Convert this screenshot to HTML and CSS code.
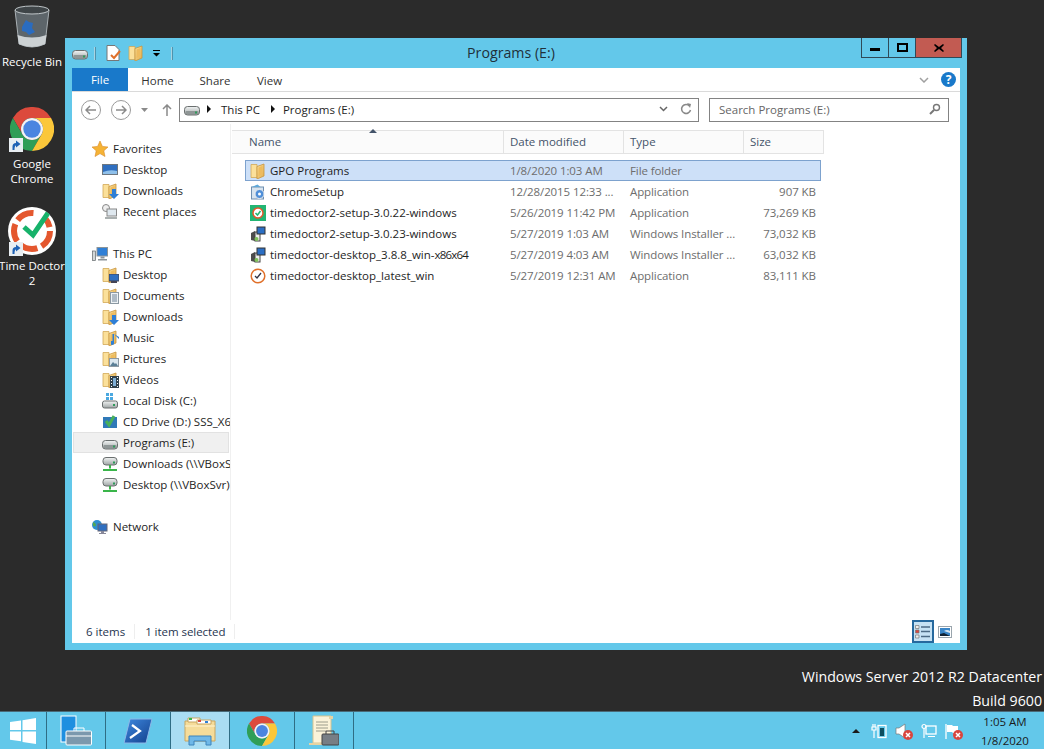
FILE: index.html

```html
<!DOCTYPE html>
<html lang="en">
<head>
    <meta charset="UTF-8">
    <title>Programs (E:)</title>
    <link rel="stylesheet" href="styles.css">
</head>
<body>
    <svg class="defs" width="0" height="0">
        <defs>
            <linearGradient id="g-fold" x1="0" y1="0" x2="1" y2="1">
                <stop offset="0" stop-color="#fbe3a0"/>
                <stop offset="1" stop-color="#e2ab48"/>
            </linearGradient>
            <linearGradient id="g-drive" x1="0" y1="0" x2="0" y2="1">
                <stop offset="0" stop-color="#f2f4f4"/>
                <stop offset="1" stop-color="#9ea5a5"/>
            </linearGradient>
            <linearGradient id="g-ps" x1="0" y1="0" x2="1" y2="1">
                <stop offset="0" stop-color="#3f8ae0"/>
                <stop offset="1" stop-color="#123f8c"/>
            </linearGradient>
        </defs>
        <symbol id="i-drive" viewBox="0 0 16 16">
            <rect x=".5" y="5.500" width="15" height="8.500" rx="3" fill="url(#g-drive)" stroke="#6a6f6f"/>
            <rect x="1.500" y="10" width="13" height="3" rx="1" fill="#8f9696"/>
            <rect x="11" y="10.500" width="2" height="2" fill="#2f9a5a"/>
        </symbol>
        <symbol id="i-folder" viewBox="0 0 16 16">
            <path d="M1 1.500h6v13H1z" fill="#fbe09a" stroke="#d2a858" stroke-width=".8"/>
            <path d="M7 3.500l7-2.500v12l-7 3z" fill="url(#g-fold)" stroke="#c9963e" stroke-width=".8"/>
            <path d="M8.500 4.500l4-1.400v8.400l-4 1.600z" fill="#eebb5e"/>
        </symbol>
        <symbol id="i-chrome" viewBox="0 0 48 48">
            <path d="M3.200 12A24 24 0 0 1 44.800 12H24A12 12 0 0 0 13.600 30Z" fill="#dc4a3c"/>
            <path d="M3.200 12A24 24 0 0 0 24 48L34.400 30A12 12 0 0 1 13.600 30Z" fill="#2f9e57"/>
            <path d="M44.800 12A24 24 0 0 1 24 48L34.400 30A12 12 0 0 0 24 12Z" fill="#fbc73a"/>
            <circle cx="24" cy="24" r="12" fill="#f3f3f3"/>
            <circle cx="24" cy="24" r="9.500" fill="#4a85e0"/>
        </symbol>
        <symbol id="i-shortcut" viewBox="0 0 14 14">
            <rect width="14" height="14" fill="#e9eef2"/>
            <path d="M3.500 12V8.500Q3.500 5 7 5V2.500L11.500 6 7 9.500V7.500Q5.500 7.500 5.500 12z" fill="#1f62b5"/>
        </symbol>
        <symbol id="i-msi" viewBox="0 0 16 16">
            <path d="M1 7l4-2v10l-4-1z" fill="#4d4d4d"/>
            <rect x="5" y="6" width="5" height="9" fill="#eee" stroke="#444"/>
            <rect x="7" y="1" width="8" height="7" fill="#2c6fc4" stroke="#333"/>
            <circle cx="6.500" cy="13" r="2" fill="#7fc25a"/>
        </symbol>
        <symbol id="i-net" viewBox="0 0 16 16">
            <rect x="1" y="1.500" width="14" height="7.500" rx="3" fill="url(#g-drive)" stroke="#6a6f6f"/>
            <rect x="11" y="5.500" width="2" height="2" fill="#2f9a5a"/>
            <path d="M8 9v3.500M1 14h14" stroke="#3ab54a" stroke-width="2"/>
        </symbol>
        <symbol id="i-pc" viewBox="0 0 16 16">
            <rect x="5" y="1.500" width="10.500" height="8.500" fill="#2f7fd6" stroke="#8b9499"/>
            <path d="M8.500 10.500h4v2h-4zM6 13h9v1.500H6z" fill="#8b9499"/>
            <rect x=".5" y="5" width="3" height="9.500" fill="#d4d8d9" stroke="#5f6669" stroke-width=".7"/>
        </symbol>
        <symbol id="i-redx" viewBox="0 0 10 10">
            <circle cx="5" cy="5" r="5" fill="#d9463e"/>
            <path d="M3 3l4 4M7 3l-4 4" stroke="#fff" stroke-width="1.500"/>
        </symbol>
    </svg>

    <div class="desktop">
        <!-- desktop icons -->
        <div class="desk-icon recycle">
            <svg width="36" height="44" viewBox="0 0 36 44">
                <path d="M1 5l4 34q13 6 26 0l4-34z" fill="#5d656a" stroke="#a9b0b4"/>
                <ellipse cx="18" cy="5" rx="17" ry="4" fill="#3f4548" stroke="#c0c6c9"/>
                <path d="M3.500 30q14.500 5 29 0l-1.500 9q-13 6-26 0z" fill="#ccd1d3"/>
                <path d="M8 22l4-7 3 2 4 1-1 5 3 4-6 3-3-3-4-1z" fill="#2a6cc0"/>
            </svg>
            <span>Recycle Bin</span>
        </div>
        <div class="desk-icon chrome">
            <svg class="main-pic" width="44" height="44"><use href="#i-chrome"/></svg>
            <svg class="arrow" width="14" height="14"><use href="#i-shortcut"/></svg>
            <span>Google<br>Chrome</span>
        </div>
        <div class="desk-icon doctor">
            <svg class="main-pic" width="48" height="48" viewBox="0 0 48 48">
                <circle cx="24" cy="24" r="24" fill="#fff"/>
                <circle cx="24" cy="24" r="18" fill="none" stroke="#e4572e" stroke-width="6" stroke-dasharray="18 4.600"/>
                <path d="M30 2L42 8 33 18 24 14z" fill="#fff"/>
                <path d="M16 20l9 8L40 6" fill="none" stroke="#17b26a" stroke-width="5"/>
            </svg>
            <svg class="arrow" width="14" height="14"><use href="#i-shortcut"/></svg>
            <span>Time Doctor<br>2</span>
        </div>

        <div class="window">
            <div class="titlebar">
                <div class="quick">
                    <svg width="16" height="16"><use href="#i-drive"/></svg>
                    <i class="qsep"></i>
                    <svg class="qdoc" width="15" height="16" viewBox="0 0 15 16">
                        <path d="M1 .5h8l4 4v11H1z" fill="#fff" stroke="#777"/>
                        <path d="M5 10l3 3 6-7" fill="none" stroke="#e0702a" stroke-width="2"/>
                    </svg>
                    <svg width="16" height="16"><use href="#i-folder"/></svg>
                    <svg class="qdrop" width="8" height="8" viewBox="0 0 8 8">
                        <path d="M0 1h7v1H0zM0 4h7L3.500 7.500z" fill="#000"/>
                    </svg>
                    <i class="qsep"></i>
                </div>
                <div class="title">Programs (E:)</div>
                <div class="caption">
                    <div class="cap-btn min"><i></i></div>
                    <div class="cap-btn max"><i></i></div>
                    <div class="cap-btn close">
                        <svg width="10" height="8" viewBox="0 0 10 8">
                            <path d="M1 0l4 3 4-3 1 1-3 3 3 3-1 1-4-3-4 3-1-1 3-3-3-3z" fill="#000"/>
                        </svg>
                    </div>
                </div>
            </div>

            <div class="ribbon">
                <div class="tab file">File</div>
                <div class="tab">Home</div>
                <div class="tab">Share</div>
                <div class="tab">View</div>
                <svg class="chev" width="10" height="6" viewBox="0 0 10 6">
                    <path d="M1 1l4 4 4-4" fill="none" stroke="#a0a0a0" stroke-width="1.500"/>
                </svg>
                <div class="help">?</div>
            </div>

            <div class="navbar">
                <div class="circle-btn"><svg width="12" height="10" viewBox="0 0 12 10"><path d="M5 1L1 5l4 4M1 5h10" fill="none" stroke="#8a8a8a" stroke-width="1.500"/></svg></div>
                <div class="circle-btn fwd"><svg width="12" height="10" viewBox="0 0 12 10"><path d="M7 1l4 4-4 4M11 5H1" fill="none" stroke="#8a8a8a" stroke-width="1.500"/></svg></div>
                <svg class="hist" width="7" height="4" viewBox="0 0 7 4"><path d="M0 0h7L3.500 4z" fill="#8a8a8a"/></svg>
                <svg class="up" width="10" height="12" viewBox="0 0 10 12"><path d="M5 12V1M1 5l4-4 4 4" fill="none" stroke="#8a8a8a" stroke-width="1.500"/></svg>
                <div class="address">
                    <svg width="16" height="16"><use href="#i-drive"/></svg>
                    <i class="crumb"></i><span>This PC</span>
                    <i class="crumb second"></i><span>Programs (E:)</span>
                    <svg class="addr-drop" width="9" height="6" viewBox="0 0 9 6"><path d="M1 1l3.500 3.500L8 1" fill="none" stroke="#666" stroke-width="1.500"/></svg>
                    <svg class="addr-refresh" width="12" height="12" viewBox="0 0 12 12"><path d="M9.500 3A4.500 4.500 0 1 0 10.500 7" fill="none" stroke="#888" stroke-width="1.500"/><path d="M7 0l4 1-1 4z" fill="#888"/></svg>
                </div>
                <div class="search">
                    <span>Search Programs (E:)</span>
                    <svg width="12" height="12" viewBox="0 0 12 12"><circle cx="7.500" cy="4.500" r="3" fill="none" stroke="#777" stroke-width="1.400"/><path d="M5 7l-4 4" stroke="#777" stroke-width="2"/></svg>
                </div>
            </div>

            <div class="content">
                <div class="sidebar">
                    <div class="side-row top">
                        <svg width="16" height="16" viewBox="0 0 16 16"><path d="M8 0l2.400 5.400 5.600.6-4.200 3.800 1.200 5.700L8 12.600 3 15.500l1.200-5.700L0 6l5.600-.6z" fill="#f5b335" stroke="#d98a2a" stroke-width=".6"/></svg>
                        Favorites
                    </div>
                    <div class="side-row"><svg width="16" height="16" viewBox="0 0 16 16"><rect x=".5" y="2.500" width="15" height="10" fill="#2f6fc0" stroke="#6d7780"/><path d="M1 10q7-3 14-1v3H1z" fill="#8fc0ea"/></svg>Desktop</div>
                    <div class="side-row"><div class="fold"><svg width="16" height="16"><use href="#i-folder"/></svg><svg class="over" width="10" height="10" viewBox="0 0 10 10"><path d="M3 0h4v5h3L5 10 0 5h3z" fill="#2f7fd6"/></svg></div>Downloads</div>
                    <div class="side-row"><svg width="16" height="16" viewBox="0 0 16 16"><circle cx="4" cy="4" r="3.500" fill="#eee" stroke="#888"/><rect x="5" y="5" width="9.500" height="7" fill="#dfe8ef" stroke="#888"/><path d="M3 13h12v2H3z" fill="#aab0b0"/></svg>Recent places</div>
                    <div class="side-gap"></div>
                    <div class="side-row top"><svg width="16" height="16"><use href="#i-pc"/></svg>This PC</div>
                    <div class="side-row"><div class="fold"><svg width="16" height="16"><use href="#i-folder"/></svg><svg class="over" width="10" height="9" viewBox="0 0 10 9"><rect width="10" height="7" fill="#2f6fc0" stroke="#445"/><rect x="2" y="7" width="6" height="2" fill="#445"/></svg></div>Desktop</div>
                    <div class="side-row"><div class="fold"><svg width="16" height="16"><use href="#i-folder"/></svg><svg class="over" width="9" height="12" viewBox="0 0 9 12"><rect x=".5" y=".5" width="8" height="11" fill="#eef2f5" stroke="#8c99a3"/><path d="M2 3h5M2 5h5M2 7h5M2 9h5" stroke="#6f8396"/></svg></div>Documents</div>
                    <div class="side-row"><div class="fold"><svg width="16" height="16"><use href="#i-folder"/></svg><svg class="over" width="10" height="10" viewBox="0 0 10 10"><path d="M3 0h4v5h3L5 10 0 5h3z" fill="#2f7fd6"/></svg></div>Downloads</div>
                    <div class="side-row"><div class="fold"><svg width="16" height="16"><use href="#i-folder"/></svg><svg class="over" width="8" height="12" viewBox="0 0 8 12"><path d="M3 0v8.500A2 2 0 1 1 1.500 7V0H3l5 3v2z" fill="#2f7fd6"/></svg></div>Music</div>
                    <div class="side-row"><div class="fold"><svg width="16" height="16"><use href="#i-folder"/></svg><svg class="over" width="10" height="9" viewBox="0 0 10 9"><rect x=".5" y=".5" width="9" height="8" fill="#dbe7ef" stroke="#8c99a3"/><path d="M1 8l3-4 2 2 1-1 2 3z" fill="#5a7f96"/></svg></div>Pictures</div>
                    <div class="side-row"><div class="fold"><svg width="16" height="16"><use href="#i-folder"/></svg><svg class="over" width="9" height="12" viewBox="0 0 9 12"><rect width="9" height="12" fill="#31424d"/><path d="M1 1h1v1H1zM1 4h1v1H1zM1 7h1v1H1zM1 10h1v1H1zM7 1h1v1H7zM7 4h1v1H7zM7 7h1v1H7zM7 10h1v1H7z" fill="#fff"/><rect x="3" y="2" width="3" height="8" fill="#7fb0d8"/></svg></div>Videos</div>
                    <div class="side-row"><svg width="16" height="16" viewBox="0 0 16 16"><path d="M4 0h3v3H4zM8 0h3v3H8zM4 4h3v3H4zM8 4h3v3H8z" fill="#4aa8e0"/><rect x=".5" y="8" width="15" height="7" rx="2" fill="url(#g-drive)" stroke="#6a6f6f"/><rect x="11" y="11" width="2" height="2" fill="#2f9a5a"/></svg>Local Disk (C:)</div>
                    <div class="side-row"><svg width="16" height="16" viewBox="0 0 16 16"><rect x="1" y="3" width="14" height="11" fill="#2f79b8"/><path d="M4 7l3 4 5-9" fill="none" stroke="#49b05a" stroke-width="3"/></svg>CD Drive (D:) SSS_X6</div>
                    <div class="side-row current"><svg width="16" height="16"><use href="#i-drive"/></svg>Programs (E:)</div>
                    <div class="side-row"><svg width="16" height="16"><use href="#i-net"/></svg>Downloads (\\VBoxS</div>
                    <div class="side-row"><svg width="16" height="16"><use href="#i-net"/></svg>Desktop (\\VBoxSvr)</div>
                    <div class="side-gap"></div>
                    <div class="side-row top"><svg width="16" height="16" viewBox="0 0 16 16"><circle cx="5" cy="6" r="5" fill="#2f8fd0"/><path d="M1 3q3 1 3 3t-3 1z" fill="#53a853"/><rect x="6" y="5" width="9" height="7" fill="#2f6fc0" stroke="#667"/><path d="M9 12h3v2H9zM7 14h7v1H7z" fill="#889"/></svg>Network</div>
                </div>

                <div class="files">
                    <div class="sort-caret"></div>
                    <div class="file-head">
                        <div>Name</div>
                        <div>Date modified</div>
                        <div>Type</div>
                        <div>Size</div>
                    </div>
                    <div class="file-row selected">
                        <div class="fname"><svg width="16" height="16"><use href="#i-folder"/></svg>GPO Programs</div>
                        <div>1/8/2020 1:03 AM</div><div>File folder</div><div class="fsize"></div>
                    </div>
                    <div class="file-row">
                        <div class="fname"><svg width="16" height="16" viewBox="0 0 16 16"><rect x="1.500" y="3" width="12" height="12" fill="#d7e4ef" stroke="#6f8fb0"/><circle cx="9.500" cy="10" r="4.500" fill="#4f8fd8" stroke="#eee"/><path d="M1.500 3l6-2.500 3 2.500z" fill="#5fa8d8"/><circle cx="9.500" cy="10" r="1.500" fill="#fff"/></svg>ChromeSetup</div>
                        <div>12/28/2015 12:33 ...</div><div>Application</div><div class="fsize">907 KB</div>
                    </div>
                    <div class="file-row">
                        <div class="fname"><svg width="16" height="16" viewBox="0 0 16 16"><rect width="16" height="16" fill="#22b573"/><circle cx="8" cy="8" r="5" fill="#fff" stroke="#e4572e" stroke-width="1.500"/><path d="M5.500 8l2 2 3-4" fill="none" stroke="#22b573" stroke-width="1.500"/></svg>timedoctor2-setup-3.0.22-windows</div>
                        <div>5/26/2019 11:42 PM</div><div>Application</div><div class="fsize">73,269 KB</div>
                    </div>
                    <div class="file-row">
                        <div class="fname"><svg width="16" height="16"><use href="#i-msi"/></svg>timedoctor2-setup-3.0.23-windows</div>
                        <div>5/27/2019 1:03 AM</div><div>Windows Installer ...</div><div class="fsize">73,032 KB</div>
                    </div>
                    <div class="file-row">
                        <div class="fname"><svg width="16" height="16"><use href="#i-msi"/></svg><span>timedoctor-desktop_3.8.8_win-<span class="tight">x86x64</span></span></div>
                        <div>5/27/2019 4:03 AM</div><div>Windows Installer ...</div><div class="fsize">63,032 KB</div>
                    </div>
                    <div class="file-row">
                        <div class="fname"><svg width="16" height="16" viewBox="0 0 16 16"><circle cx="8" cy="8" r="6.800" fill="#fff" stroke="#e0702a" stroke-width="1.500"/><path d="M5 8l2 2 4-5" fill="none" stroke="#334" stroke-width="1.300"/></svg>timedoctor-desktop_latest_win</div>
                        <div>5/27/2019 12:31 AM</div><div>Application</div><div class="fsize">83,111 KB</div>
                    </div>
                </div>
            </div>

            <div class="statusbar">
                <span class="count">6 items</span>
                <span class="picked">1 item selected</span>
                <div class="views">
                    <div class="view-btn on">
                        <svg width="16" height="14" viewBox="0 0 16 14"><path d="M.5 .5h3.500v3H.5z" fill="#eee" stroke="#777" stroke-width=".7"/><path d="M.5 5h3.500v3H.5z" fill="#d9463e" stroke="#777" stroke-width=".7"/><path d="M.5 10h3.500v3H.5z" fill="#eee" stroke="#777" stroke-width=".7"/><path d="M6 2h9M6 6.500h9M6 11.500h9" stroke="#4c6b85" stroke-width="1.300"/></svg>
                    </div>
                    <div class="view-btn plain">
                        <svg width="14" height="12" viewBox="0 0 14 12"><rect x=".5" y=".5" width="13" height="11" fill="#fff" stroke="#9aa5ad"/><rect x="2" y="2" width="10" height="8" fill="#3a86c8"/><path d="M2 10V8l4-1 6 3z" fill="#123"/><path d="M6 5q3-2 6 0v2z" fill="#dbe7ef"/></svg>
                    </div>
                </div>
            </div>
        </div>

        <div class="edition">Windows Server 2012 R2 Datacenter<br>Build 9600</div>
    </div>

    <div class="taskbar">
        <div class="task start">
            <svg width="28" height="28" viewBox="0 0 28 28"><path d="M1 5l11-1.600V13H1zM13.500 3.200L27 1v12H13.500zM1 14.500h11v9.700L1 22.700zM13.500 14.500H27V27l-13.500-2z" fill="#fff"/></svg>
        </div>
        <div class="task">
            <svg width="32" height="32" viewBox="0 0 32 32"><rect x="1" y="1" width="15" height="26" fill="#1e8fe0" stroke="#fff"/><rect x="6" y="16" width="25.500" height="14" rx="1" fill="#7b98ad" stroke="#fff"/><path d="M14 16v-3h10v3M6 21h25.500" fill="none" stroke="#fff"/></svg>
        </div>
        <div class="task">
            <svg width="28" height="26" viewBox="0 0 28 26"><path d="M6 1h22l-6 24H0z" fill="url(#g-ps)" stroke="#8db8e8"/><path d="M8 7l8 6-10 7" fill="none" stroke="#fff" stroke-width="2.200"/></svg>
        </div>
        <div class="task active">
            <svg width="32" height="32" viewBox="0 0 32 32"><path d="M1 6h30v20H1z" fill="#f5dc9a" stroke="#c9a660"/><path d="M4 3h12v4H4z" fill="#fff" stroke="#c9a660"/><path d="M5 3h3v2H5z" fill="#3ab54a"/><path d="M13 5h14v4H13z" fill="#fff" stroke="#c9a660"/><path d="M14 5h3v2h-3z" fill="#d9463e"/><path d="M21 6h3v2h-3z" fill="#2f7fd6"/><path d="M1 11h30" stroke="#fff3cf"/><path d="M5 30V21h22v9h-5v-4H10v4z" fill="#6fb8e8" stroke="#3c84bc"/></svg>
        </div>
        <div class="task">
            <svg width="30" height="30"><use href="#i-chrome"/></svg>
        </div>
        <div class="task">
            <svg width="30" height="32" viewBox="0 0 30 32"><path d="M4 1h18v27H4z" fill="#fbf3d9" stroke="#d9c48f"/><path d="M0 28h18v2H0zM20 1h4v3h-4z" fill="#e5d3a3"/><path d="M7 7h12M7 10h12M7 13h12M7 16h10" stroke="#9c9c8c"/><rect x="13" y="19" width="17" height="11" rx="1" fill="#777e85" stroke="#444"/><path d="M17 19v-3h8v3" fill="none" stroke="#444"/></svg>
        </div>
        <div class="tray">
            <svg class="tray-up" width="8" height="4" viewBox="0 0 8 4"><path d="M4 0l4 4H0z" fill="#1a1a1a"/></svg>
            <svg width="16" height="16" viewBox="0 0 16 16"><path d="M2 1v3M4 1v3M1 4h4v3H1zM3 7v8" fill="none" stroke="#fff" stroke-width="1.200"/><rect x="7" y="2.500" width="8" height="12" fill="none" stroke="#fff" stroke-width="1.300"/><rect x="9" y="5" width="4" height="8" fill="#0d4e60"/></svg>
            <div class="tray-ico">
                <svg width="14" height="16" viewBox="0 0 14 16"><path d="M1 5h3l6-4v14l-6-4H1z" fill="#fff" stroke="#777" stroke-width=".7"/></svg>
                <svg class="badge" width="10" height="10"><use href="#i-redx"/></svg>
            </div>
            <svg width="16" height="16" viewBox="0 0 16 16"><rect x="5" y="3" width="10" height="8" fill="none" stroke="#fff" stroke-width="1.300"/><circle cx="3" cy="3.500" r="2" fill="none" stroke="#fff" stroke-width="1.200"/><path d="M3 5.500V15M7 13.500h7" stroke="#fff" stroke-width="1.200"/></svg>
            <div class="tray-ico">
                <svg width="14" height="16" viewBox="0 0 14 16"><path d="M1 1v15" stroke="#fff" stroke-width="1.300"/><path d="M2 2h5l1 1h5v7H8L7 9H2z" fill="#fff"/></svg>
                <svg class="badge" width="10" height="10"><use href="#i-redx"/></svg>
            </div>
            <div class="clock">1:05 AM<br>1/8/2020</div>
        </div>
    </div>
</body>
</html>
```

FILE: styles.css

```css
:root {
    --frame-color: #63c8ea;
    --desk-color: #2b2b2b;
    --text-color: #1e1e1e;
    --head-color: #44546a;
    --line-color: #e3e3e3;
}

* {
    box-sizing: border-box;
}

html, body {
    margin: 0;
    height: 100%;
}

body {
    width: 1044px;
    height: 749px;
    overflow: hidden;
    display: flex;
    flex-direction: column;
    background-color: var(--desk-color);
    font-family: "Open Sans", sans-serif;
    font-size: 11.5px;
    color: var(--text-color);
}

svg {
    display: block;
    flex: none;
}

.defs {
    position: absolute;
}

.desktop {
    flex: 1;
    position: relative;
    display: flex;
    flex-direction: column;
    justify-content: flex-end;
    align-items: flex-end;
}

/* desktop icons */
.desk-icon {
    position: absolute;
    left: 0;
    width: 64px;
    color: #FFFFFF;
    text-align: center;
    line-height: 15px;
    white-space: nowrap;
    display: flex;
    flex-direction: column;
    align-items: center;
}

.recycle {
    top: 5px;
}

.recycle span {
    margin-top: 5px;
}

.chrome {
    top: 107px;
}

.chrome span {
    margin-top: 5px;
}

.doctor {
    top: 207px;
}

.doctor span {
    margin-top: 3px;
}

.arrow {
    position: absolute;
    left: 9px;
}

.chrome .arrow {
    top: 31px;
}

.doctor .arrow {
    top: 35px;
}

/* explorer window */
.window {
    position: absolute;
    left: 65px;
    top: 38px;
    width: 902px;
    height: 612px;
    padding: 0 7px 7px;
    background-color: var(--frame-color);
    display: flex;
    flex-direction: column;
}

.titlebar {
    height: 30px;
    position: relative;
    display: flex;
}

.quick {
    display: flex;
    align-items: center;
    height: 30px;
}

.qsep {
    width: 1px;
    height: 13px;
    background-color: #a8d4e2;
    border-right: 1px solid #4f93ad;
    box-sizing: content-box;
    margin-left: 6px;
}

.qdoc {
    margin: 0 7px 0 10px;
}

.qdrop {
    margin: 0 4px 0 9px;
}

.title {
    position: absolute;
    left: 0;
    right: 10px;
    top: 6px;
    text-align: center;
    font-size: 14.2px;
    line-height: 18px;
    color: #20303a;
}

.caption {
    position: absolute;
    right: -2px;
    top: 0;
    height: 20px;
    display: flex;
    border: 1px solid #2f4a58;
    border-top: none;
}

.cap-btn {
    display: flex;
    align-items: center;
    justify-content: center;
    width: 27px;
    border-right: 1px solid #2f4a58;
}

.cap-btn.min i {
    width: 10px;
    height: 3px;
    margin-top: 4px;
    background-color: #000;
}

.cap-btn.max i {
    width: 11px;
    height: 9px;
    border: 2px solid #000;
}

.cap-btn.close {
    width: 45px;
    background-color: #c25b52;
    border-right: none;
}

.ribbon {
    height: 24px;
    background-color: #FFFFFF;
    border-bottom: 1px solid #dadada;
    display: flex;
    align-items: center;
}

.tab {
    width: 57px;
    padding-top: 2px;
    text-align: center;
    line-height: 21px;
    color: #333;
}

.tab:nth-child(3) {
    margin-left: 1px;
    width: 56px;
}

.tab:nth-child(4) {
    margin-left: -2px;
}

.tab.file {
    width: 56px;
    margin-right: 1px;
    padding-top: 0;
    line-height: 23px;
    background-color: #1979ca;
    color: #FFFFFF;
}

.chev {
    margin-left: auto;
    margin-right: 12px;
}

.help {
    width: 15px;
    height: 15px;
    margin-right: 4px;
    border-radius: 50%;
    background-color: #1979ca;
    color: #FFFFFF;
    font-weight: bold;
    font-size: 12px;
    line-height: 15px;
    text-align: center;
}

.navbar {
    height: 32px;
    background-color: #FFFFFF;
    display: flex;
    align-items: center;
    padding: 6px 11px 2px 9px;
}

.circle-btn {
    width: 20px;
    height: 20px;
    border: 1px solid #9a9a9a;
    border-radius: 50%;
    display: flex;
    align-items: center;
    justify-content: center;
}

.circle-btn.fwd {
    margin-left: 10px;
}

.hist {
    margin-left: 10px;
}

.up {
    margin-left: 14px;
}

.address {
    width: 520px;
    height: 24px;
    margin-left: 7px;
    border: 1px solid #838383;
    display: flex;
    align-items: center;
    padding: 0 0 2px 4px;
}

.crumb {
    width: 0;
    height: 0;
    margin: 0 10px 0 7px;
    border-left: 4px solid #111;
    border-top: 4px solid transparent;
    border-bottom: 4px solid transparent;
}

.crumb.second {
    margin: 0 8px 0 11px;
}

.addr-drop {
    margin-left: auto;
}

.addr-refresh {
    margin: 0 6px 0 12px;
}

.search {
    width: 240px;
    height: 24px;
    margin-left: 10px;
    border: 1px solid #838383;
    display: flex;
    align-items: center;
    justify-content: space-between;
    padding: 0 7px 2px 9px;
    color: #666;
}

.content {
    flex: 1;
    display: flex;
    background-color: #FFFFFF;
    min-height: 0;
}

.sidebar {
    width: 159px;
    padding: 14px 1px 0;
    border-right: 1px solid #f0f0f0;
    overflow: hidden;
}

.side-row {
    height: 21px;
    padding-left: 29px;
    display: flex;
    align-items: center;
    gap: 5px;
    white-space: nowrap;
}

.side-row.top {
    padding-left: 19px;
}

.side-row.current {
    background-color: #f0f0f0;
    border: 1px solid #e2e2e2;
    padding-left: 28px;
}

.side-gap {
    height: 21px;
}

/* folder with a small picture over its corner */
.fold {
    position: relative;
    width: 16px;
    height: 16px;
    flex: none;
}

.over {
    position: absolute;
    right: -1px;
    bottom: 0;
}

.files {
    flex: 1;
    position: relative;
    padding: 6px 0 0 1px;
}

.sort-caret {
    position: absolute;
    left: 138px;
    top: 5px;
    border-left: 4px solid transparent;
    border-right: 4px solid transparent;
    border-bottom: 4px solid #44546a;
}

.file-head {
    width: 592px;
    height: 24px;
    display: grid;
    grid-template-columns: 272px 120px 120px 80px;
    border-top: 1px solid var(--line-color);
    border-bottom: 1px solid var(--line-color);
    background-color: #fbfbfb;
    line-height: 22px;
    color: var(--head-color);
    margin-bottom: 6px;
}

.file-head div {
    padding-left: 6px;
    border-right: 1px solid var(--line-color);
}

.file-head div:first-child {
    padding-left: 17px;
}

.file-row {
    margin-left: 13px;
    width: 576px;
    height: 21px;
    display: grid;
    grid-template-columns: 259px 120px 120px 77px;
    align-items: center;
    color: #6d6d6d;
    white-space: nowrap;
}

.file-row > div:not(.fname):not(.fsize) {
    padding-left: 6px;
    letter-spacing: -0.1px;
}

.file-row.selected {
    background-color: #cde0f8;
    outline: 1px solid #7da2ce;
    outline-offset: -1px;
}

.fname {
    display: flex;
    align-items: center;
    gap: 4px;
    padding-left: 5px;
    color: var(--text-color);
}

.tight {
    letter-spacing: -0.8px;
}

.fsize {
    text-align: right;
    padding-right: 5px;
    letter-spacing: -0.05px;
}

.statusbar {
    height: 23px;
    background-color: #FFFFFF;
    display: flex;
    align-items: center;
    color: #1f3550;
}

.count {
    margin-left: 14px;
    padding-right: 9px;
    border-right: 1px solid #eee;
    line-height: 15px;
}

.picked {
    margin-left: 10px;
    padding-right: 9px;
    border-right: 1px solid #eee;
    line-height: 15px;
    letter-spacing: -0.05px;
}

.views {
    margin-left: auto;
    margin-right: 7px;
    display: flex;
    align-items: center;
    gap: 3px;
}

.view-btn {
    width: 22px;
    height: 23px;
    display: flex;
    align-items: center;
    justify-content: center;
}

.view-btn.on {
    background-color: #c6e2f4;
    border: 2px solid #26699e;
}

.view-btn.plain {
    width: 16px;
}

.edition {
    text-align: right;
    color: #FFFFFF;
    font-size: 14.2px;
    line-height: 24px;
    padding-right: 2px;
    margin-bottom: -2px;
}

/* taskbar */
.taskbar {
    height: 38px;
    flex: none;
    background-color: var(--frame-color);
    border-top: 1px solid #4a6a78;
    display: flex;
}

.task {
    width: 59px;
    display: flex;
    align-items: center;
    justify-content: center;
    border-right: 1px solid #2f6d85;
}

.task:nth-child(odd) {
    width: 65px;
}

.task.start {
    width: 47px;
}

.task.active {
    background-color: #a9ddf3;
}

.tray {
    flex: 1;
    display: flex;
    align-items: center;
    justify-content: flex-end;
    gap: 8px;
    padding-right: 10px;
    color: #1a1a1a;
}

.tray-up {
    margin-right: 3px;
}

.tray-ico {
    position: relative;
    width: 18px;
    height: 16px;
}

.tray-ico .badge {
    position: absolute;
    right: 0;
    bottom: -1px;
}

.clock {
    text-align: center;
    line-height: 19px;
    font-size: 11.5px;
    margin-left: 5px;
    width: 58px;
}
```
